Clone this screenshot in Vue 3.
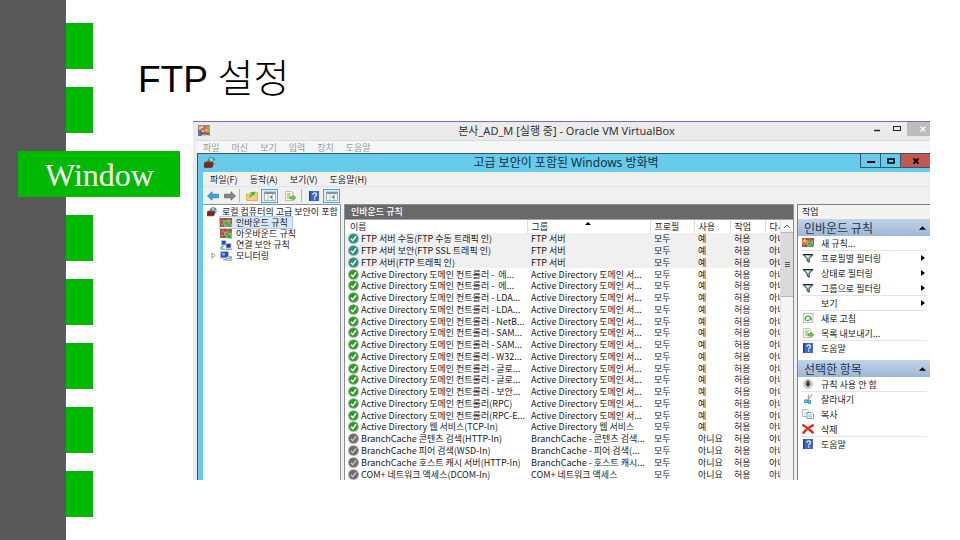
<script setup>
const tabsAfter = 5

const vmMenu = ['파일', '머신', '보기', '입력', '장치', '도움말']
const appMenu = ['파일(F)', '동작(A)', '보기(V)', '도움말(H)']

const tree = [
  { icon: 'inbound', label: '인바운드 규칙', selected: true },
  { icon: 'outbound', label: '아웃바운드 규칙' },
  { icon: 'connection', label: '연결 보안 규칙' },
  { icon: 'monitor', label: '모니터링', expandable: true }
]

const AD = 'Active Directory 도메인 컨트롤러'
const ADG = 'Active Directory 도메인 서...'

const rules = [
  { name: 'FTP 서버 수동(FTP 수동 트래픽 인)', group: 'FTP 서버', state: 'selected' },
  { name: 'FTP 서버 보안(FTP SSL 트래픽 인)', group: 'FTP 서버', state: 'selected' },
  { name: 'FTP 서버(FTP 트래픽 인)', group: 'FTP 서버', state: 'selected' },
  { name: AD + ' -  에...', group: ADG, state: 'on' },
  { name: AD + ' -  에...', group: ADG, state: 'on' },
  { name: AD + ' - LDA...', group: ADG, state: 'on' },
  { name: AD + ' - LDA...', group: ADG, state: 'on' },
  { name: AD + ' - NetB...', group: ADG, state: 'on' },
  { name: AD + ' - SAM...', group: ADG, state: 'on' },
  { name: AD + ' - SAM...', group: ADG, state: 'on' },
  { name: AD + ' - W32...', group: ADG, state: 'on' },
  { name: AD + ' - 글로...', group: ADG, state: 'on' },
  { name: AD + ' - 글로...', group: ADG, state: 'on' },
  { name: AD + ' - 보안...', group: ADG, state: 'on' },
  { name: AD + '(RPC)', group: ADG, state: 'on' },
  { name: AD + '(RPC-E...', group: ADG, state: 'on' },
  { name: 'Active Directory 웹 서비스(TCP-In)', group: 'Active Directory 웹 서비스', state: 'on' },
  { name: 'BranchCache 콘텐츠 검색(HTTP-In)', group: 'BranchCache - 콘텐츠 검색...', state: 'off' },
  { name: 'BranchCache 피어 검색(WSD-In)', group: 'BranchCache - 피어 검색(...', state: 'off' },
  { name: 'BranchCache 호스트 캐시 서버(HTTP-In)', group: 'BranchCache - 호스트 캐시...', state: 'off' },
  { name: 'COM+ 네트워크 액세스(DCOM-In)', group: 'COM+ 네트워크 액세스', state: 'off' }
]

const sections = [
  {
    title: '인바운드 규칙',
    items: [
      { icon: 'newrule', label: '새 규칙...', line: true },
      { icon: 'filter', label: '프로필별 필터링', sub: true },
      { icon: 'filter', label: '상태로 필터링', sub: true },
      { icon: 'filter', label: '그룹으로 필터링', sub: true, line: true },
      { label: '보기', sub: true, line: true },
      { icon: 'refresh', label: '새로 고침' },
      { icon: 'export', label: '목록 내보내기...', line: true },
      { icon: 'help', label: '도움말' }
    ]
  },
  {
    title: '선택한 항목',
    items: [
      { icon: 'disable', label: '규칙 사용 안 함', line: true },
      { icon: 'cut', label: '잘라내기' },
      { icon: 'copy', label: '복사' },
      { icon: 'delete', label: '삭제', line: true },
      { icon: 'help', label: '도움말' }
    ]
  }
]
</script>

<template>
  <svg class="defs" aria-hidden="true">
    <symbol id="vm" viewBox="0 0 12 12">
      <rect width="12" height="11" fill="#8b8a80" />
      <rect width="6" height="5" fill="#b5795c" />
      <rect x="6" y="1" width="3" height="6" fill="#e86a3a" />
      <rect x="9" y="1" width="3" height="7" fill="#74c742" />
      <rect x="0" y="5" width="3" height="6" fill="#4d7fae" />
      <path d="M1 2h4M1 4l4-2M7 7l2-3M4 6h2" stroke="#f2ece2" />
      <path d="M3 10V7l2 2 2-2 2 2 2-1" stroke="#a3283a" fill="none" />
      <path d="M4 10.500h7" stroke="#e9dfe2" stroke-width=".8" />
    </symbol>
    <symbol id="firewall" viewBox="0 0 12 12">
      <circle cx="7.500" cy="4.300" r="4" fill="#2f86c9" />
      <path d="M5 2q3-2 4 0T7 5zM9 4l3-1-1 4z" fill="#a5dc8c" />
      <path d="M0 5.500 2 4.500h6l1 1.500v4l-2 1H0z" fill="#9c3a2a" />
      <path d="M0 7h9M0 9h9M3 5v2M6 5v2M2 7v2M5 7v2M8 7v2M3 9v2M7 9v2" stroke="#4a1712" stroke-width=".6" />
    </symbol>
    <symbol id="wall" viewBox="0 0 12 10">
      <rect width="12" height="9" fill="#a64c3b" />
      <path d="M0 3h12M0 6h12M3 0v3M8 0v3M5 3v3M10 3v3M2 6v3M7 6v3" stroke="#d4a08f" stroke-width=".6" />
    </symbol>
    <symbol id="inbound" viewBox="0 0 12 10">
      <use href="#wall" width="12" height="10" />
      <path d="M3.500 3.500 10 2.500 8.500 4.500 12 7.500 10 9.800 7 6.800 5 8.800z" fill="#2fb13b" stroke="#e6f7df" stroke-width=".5" />
    </symbol>
    <symbol id="outbound" viewBox="0 0 12 10">
      <use href="#wall" width="12" height="10" />
      <path d="M12 9.800 6 9.500 7.500 8 4 5 6 2.800l3.200 3L11 4z" fill="#2fb13b" stroke="#e6f7df" stroke-width=".5" />
    </symbol>
    <symbol id="connection" viewBox="0 0 12 10">
      <rect x="1.500" y=".5" width="4.500" height="4.500" fill="#2449c8" stroke="#b8c4dc" stroke-width=".8" />
      <rect x="6" y="3.500" width="5" height="4.500" fill="#1c3cc0" stroke="#b8c4dc" stroke-width=".8" />
      <path d="M3 5.500v1.500H1v2h4" fill="none" stroke="#4c9a55" />
      <path d="M6 9.300h6" stroke="#707c94" />
    </symbol>
    <symbol id="monitor" viewBox="0 0 12 10">
      <rect x=".5" y=".5" width="8" height="6.500" fill="#2650d2" stroke="#b7c2da" />
      <path d="M2 2h3v2.500H2z" fill="#7fb1f3" />
      <path d="M3 8.800h4" stroke="#76849e" />
      <rect x="7" y="5.500" width="4.500" height="4" fill="#dce5ef" stroke="#8896a8" stroke-width=".7" />
      <path d="m8 7 1.200 1L11 6" fill="none" stroke="#38a34a" />
    </symbol>
    <symbol id="back" viewBox="0 0 12 10">
      <path d="M.5 5 5 .8v2.400h6.500v3.600H5v2.400z" fill="#39a7e4" stroke="#2272aa" stroke-width=".7" />
    </symbol>
    <symbol id="forward" viewBox="0 0 12 10">
      <path d="M11.500 5 7 .8v2.400H.5v3.600H7v2.400z" fill="#858585" stroke="#5d5d5d" stroke-width=".7" />
    </symbol>
    <symbol id="folder" viewBox="0 0 12 10">
      <path d="M.5 3h3l1-1.500h7v8H.5z" fill="#f1d27a" stroke="#c79d45" stroke-width=".7" />
      <path d="M3 7q0-3 2.500-4L4.500 1.500 9 .5 8.500 4.800 7.500 4Q5 5 3 7z" fill="#46b933" />
    </symbol>
    <symbol id="panel" viewBox="0 0 12 10">
      <rect x=".5" y="1" width="11" height="8.500" fill="#f4f5f6" stroke="#9aa2ab" stroke-width=".8" />
      <path d="M.5 2h11" stroke="#8590a0" stroke-width="2" />
      <path d="M4 3v6.500M8.500 3v6.500" stroke="#a7afb8" stroke-width=".7" />
      <path d="M8 4.200v3.800L5.500 6z" fill="#38ab36" />
    </symbol>
    <symbol id="export" viewBox="0 0 12 10">
      <path d="M1.500.5h6l1.500 1.500v7.500H1.500z" fill="#fdf8da" stroke="#b2aa82" stroke-width=".7" />
      <path d="M3 3h4M3 5h3M3 7h3" stroke="#7c8798" stroke-width=".8" />
      <path d="M6 5.500h3V4l3 2.700L9 9.300V8H6z" fill="#67c748" stroke="#429b2c" stroke-width=".5" />
    </symbol>
    <symbol id="help" viewBox="0 0 10 10">
      <rect width="10" height="10" fill="#3f66cc" />
      <path d="M.7 0v10" stroke="#203d91" stroke-width="1.400" />
      <path d="M3.800 3.700Q3.800 1.800 5.600 1.800t1.800 1.700c0 1.400-1.800 1.400-1.800 3" fill="none" stroke="#fff" stroke-width="1.200" />
      <rect x="5" y="7.400" width="1.300" height="1.200" fill="#fff" />
    </symbol>
    <symbol id="newrule" viewBox="0 0 12 10">
      <use href="#wall" width="12" height="10" />
      <path d="M5 4h6L9.500 5.500 12 8l-1.500 1.500L8 7 6 8.500z" fill="#2fb13b" stroke="#e6f7df" stroke-width=".4" />
      <path d="m3 0 .8 2L6 2.500 4 3.500 4 6 2.500 4.300 0 5l1.200-2L0 1.500l2 .3z" fill="#ffbf36" />
    </symbol>
    <symbol id="filter" viewBox="0 0 12 10">
      <path d="M1 1.500h10L7.200 5.500v3.700L5 7.700V5.500z" fill="#9fd2cd" stroke="#1d2c33" stroke-width="1" stroke-linejoin="round" />
      <path d="M3.500 2.300h3.500L6 5z" fill="#f0fffc" />
      <path d="M2 1.800h8.500" stroke="#1d2c33" />
    </symbol>
    <symbol id="refresh" viewBox="0 0 12 10">
      <rect x="1.500" y=".5" width="9.500" height="9" fill="#f6f8f6" stroke="#a8b0a8" stroke-width=".7" />
      <path d="M4 7.500A2.800 2.600 0 1 1 8.800 5.500" fill="none" stroke="#3caa3a" stroke-width="1.300" />
      <path d="M7 5.300h3.600L8.800 8zM3.500 8h3.500V6.300z" fill="#3caa3a" />
    </symbol>
    <symbol id="disable" viewBox="0 0 12 10">
      <circle cx="6" cy="5" r="4.600" fill="#d6d6d6" stroke="#a9a9a9" stroke-width=".6" />
      <path d="M4.500 1.800h3V4.500H9.200L6 8.300 2.800 4.500h1.700z" fill="#3f3f3f" />
    </symbol>
    <symbol id="cut" viewBox="0 0 12 10">
      <path d="M10.500 0 5.500 6.500M6.300 .5v6" stroke="#8091a3" />
      <circle cx="4" cy="7.300" r="1.400" fill="none" stroke="#2187d0" stroke-width="1.200" />
      <circle cx="7.300" cy="8" r="1.300" fill="none" stroke="#2187d0" stroke-width="1.200" />
    </symbol>
    <symbol id="copy" viewBox="0 0 12 10">
      <path d="M.5.5H5l1.500 1.500v5.500h-6z" fill="#fff" stroke="#99a6b5" stroke-width=".8" />
      <path d="M2 3h3M2 5h3" stroke="#9cb1c6" stroke-width=".7" />
      <path d="M5 3.500h4.500L11.500 5v4.500H5z" fill="#f5faff" stroke="#7d8da0" stroke-width=".8" />
      <path d="M6.500 6h3M6.500 7.800h3.500" stroke="#6c9cc8" stroke-width=".7" />
    </symbol>
    <symbol id="delete" viewBox="0 0 12 10">
      <path d="M1.200 1.300q5 3 9.600 7.200M10.800 1.300Q5 4 1.500 8.700" fill="none" stroke="#df2a26" stroke-width="2.400" stroke-linecap="round" />
    </symbol>
  </svg>

  <div class="slide">
    <div class="rail"></div>
    <div class="tabs">
      <i class="tab"></i>
      <i class="tab"></i>
      <div class="banner">Window</div>
      <i v-for="n in tabsAfter" :key="n" class="tab"></i>
    </div>

    <main class="content">
      <h1>FTP <span>설정</span></h1>

      <section class="vm">
        <header class="vm-title">
          <svg class="ico"><use href="#vm" /></svg>
          <h2>본사_AD_M [실행 중] - Oracle VM VirtualBox</h2>
          <div class="vm-ctl">
            <button aria-label="최소화"><svg viewBox="0 0 8 8"><path d="M1 5.500h6" stroke="#222" stroke-width="1.500" /></svg></button>
            <button aria-label="최대화"><svg viewBox="0 0 8 8"><rect x=".5" y="1.500" width="7" height="4" fill="none" stroke="#222" /></svg></button>
            <button class="close" aria-label="닫기"><svg viewBox="0 0 8 8"><path d="m1.500 1.500 5 5m0-5-5 5" stroke="#fff" stroke-width="1.200" /></svg></button>
          </div>
        </header>
        <nav class="vm-menu">
          <button v-for="m in vmMenu" :key="m">{{ m }}</button>
        </nav>

        <div class="app">
          <header class="app-title">
            <svg class="ico"><use href="#firewall" /></svg>
            <h2>고급 보안이 포함된 Windows 방화벽</h2>
            <div class="app-ctl">
              <button aria-label="창 최소화"><svg viewBox="0 0 8 8"><path d="M0 5h8" stroke="#000" stroke-width="2" /></svg></button>
              <button aria-label="창 최대화"><svg viewBox="0 0 8 8"><rect x="1" y="2" width="6" height="4" fill="none" stroke="#000" stroke-width="1.600" /></svg></button>
              <button class="close" aria-label="창 닫기"><svg viewBox="0 0 8 8"><path d="m1.500 1.500 5 5m0-5-5 5" stroke="#000" stroke-width="1.800" /></svg></button>
            </div>
          </header>

          <div class="client">
            <nav class="app-menu">
              <button v-for="m in appMenu" :key="m">{{ m }}</button>
            </nav>
            <div class="toolbar">
              <button aria-label="뒤로"><svg><use href="#back" /></svg></button>
              <button aria-label="앞으로"><svg><use href="#forward" /></svg></button>
              <span class="sep"></span>
              <button aria-label="위로"><svg><use href="#folder" /></svg></button>
              <button class="on" aria-label="콘솔 트리"><svg><use href="#panel" /></svg></button>
              <button class="exp" aria-label="내보내기"><svg><use href="#export" /></svg></button>
              <span class="sep"></span>
              <button aria-label="도움말"><svg><use href="#help" /></svg></button>
              <button class="on" aria-label="작업 창"><svg><use href="#panel" /></svg></button>
            </div>

            <div class="panes">
              <div class="tree">
                <button class="root"><svg><use href="#firewall" /></svg><span>로컬 컴퓨터의 고급 보안이 포함</span></button>
                <ul>
                  <li v-for="t in tree" :key="t.label">
                    <span class="twist"><svg v-if="t.expandable" viewBox="0 0 6 8"><path d="m1 1 4 3-4 3z" fill="#fff" stroke="#888" /></svg></span>
                    <button :class="{ picked: t.selected }"><svg><use :href="'#' + t.icon" /></svg><span>{{ t.label }}</span></button>
                  </li>
                </ul>
              </div>

              <div class="list">
                <h3>인바운드 규칙</h3>
                <div class="list-body">
                  <table>
                    <colgroup>
                      <col class="c-name" /><col class="c-group" /><col class="c-profile" /><col class="c-use" /><col class="c-act" /><col />
                    </colgroup>
                    <thead>
                      <tr>
                        <th>이름</th>
                        <th class="sorted">그룹<svg class="sort" viewBox="0 0 6 3"><path d="m0 3 3-3 3 3z" /></svg></th>
                        <th>프로필</th><th>사용</th><th>작업</th><th>다시</th>
                      </tr>
                    </thead>
                    <tbody>
                      <tr v-for="(r, i) in rules" :key="i" :class="r.state">
                        <td class="name">
                          <svg class="mark" viewBox="0 0 12 12">
                            <circle class="ring" cx="6" cy="6" r="5.800" />
                            <circle class="disc" cx="6" cy="6" r="4.600" />
                            <path class="tick" d="m3.300 6.200 2 2.200L8.800 3.500" />
                          </svg><span>{{ r.name }}</span>
                        </td>
                        <td>{{ r.group }}</td>
                        <td>모두</td>
                        <td>{{ r.state === 'off' ? '아니요' : '예' }}</td>
                        <td>허용</td>
                        <td>아니</td>
                      </tr>
                    </tbody>
                  </table>
                  <div class="scroll">
                    <button aria-label="위로 스크롤"><svg viewBox="0 0 8 6"><path d="m1 5 3-3 3 3" fill="none" stroke="#555" /></svg></button>
                    <div class="thumb"><i></i><i></i><i></i></div>
                  </div>
                </div>
              </div>

              <aside class="actions">
                <h3>작업</h3>
                <section v-for="s in sections" :key="s.title">
                  <h4>{{ s.title }}<svg viewBox="0 0 8 4"><path d="m0 4 4-4 4 4z" /></svg></h4>
                  <button v-for="a in s.items" :key="a.label" :class="{ line: a.line }">
                    <svg class="lead"><use v-if="a.icon" :href="'#' + a.icon" /></svg>
                    <span>{{ a.label }}</span>
                    <svg v-if="a.sub" class="more" viewBox="0 0 4 6"><path d="m0 0 4 3-4 3z" /></svg>
                  </button>
                </section>
              </aside>
            </div>
          </div>
        </div>
      </section>
    </main>
  </div>
</template>

<style>
body {
  background: #fff;
}
</style>

<style scoped>
.defs {
  position: absolute;
  width: 0;
  height: 0;
}
.slide {
  display: flex;
  min-height: 100vh;
  color: #1c1c1c;
  font: 9px/11px "Noto Sans CJK KR", sans-serif;
}
svg {
  display: block;
  flex: none;
}
button {
  display: flex;
  align-items: center;
  padding: 0;
  border: 0;
  background: none;
  color: inherit;
  font: inherit;
  white-space: nowrap;
}
h1, h2, h3, h4, ul {
  margin: 0;
  padding: 0;
  font-weight: 400;
}
.rail {
  flex: none;
  width: 66px;
  background: #595959;
}
.tabs {
  display: flex;
  flex: none;
  flex-direction: column;
  gap: 18px;
  width: 27px;
  padding: 23px 0;
  box-sizing: border-box;
}
.tab {
  height: 46px;
  background: #00b900;
}
.banner {
  z-index: 1;
  width: 162px;
  height: 46px;
  margin-left: -48px;
  padding-left: 27px;
  box-sizing: border-box;
  background: #00b900;
  color: #fff;
  font: 32px/48px "Liberation Serif", serif;
}
.content {
  flex: 1;
  min-width: 0;
  padding: 57px 30px 60px 100px;
}
h1 {
  height: 44px;
  margin: 0 0 20px -55px;
  color: #000;
  font: 37px/44px "Liberation Sans", "Noto Sans CJK KR", sans-serif;
}
h1 span {
  font-size: 39px;
  font-weight: 300;
}

.vm {
  border-top: 1px solid #8264cc;
  background: #ebebeb;
}
.vm-title {
  display: flex;
  align-items: center;
  height: 18px;
  padding-left: 5px;
}
.ico {
  width: 12px;
  height: 12px;
}
h2 {
  flex: 1;
  padding-left: 56px;
  color: #333;
  font: 11px/16px "Noto Sans", "Noto Sans CJK KR", sans-serif;
  text-align: center;
}
.vm-ctl, .app-ctl {
  display: flex;
  align-self: flex-start;
}
.vm-ctl button {
  justify-content: center;
  width: 20px;
  height: 14px;
}
.vm-ctl svg, .app-ctl svg {
  width: 8px;
  height: 8px;
}
.vm-ctl .close {
  width: 23px;
  padding-left: 8px;
  background: #bcbcbc;
}
.vm-menu {
  display: flex;
  gap: 12px;
  height: 12px;
  margin-left: 3px;
  padding-left: 7px;
  border-top: 1px solid #d8dadc;
  background: #f4f6f8;
  color: #999;
}
.app {
  margin-left: 4px;
  padding-left: 5px;
  border: solid #33566a;
  border-width: 1px 0 0 1px;
  background: #67caea;
}
.app-title {
  display: flex;
  align-items: center;
  height: 18px;
  padding-left: 1px;
}
.app-title h2 {
  color: #12303c;
  font-size: 12px;
}
.app-ctl button {
  justify-content: center;
  width: 20px;
  height: 14px;
  border: solid #2b5c70;
  border-width: 0 0 1px 1px;
}
.app-ctl .close {
  width: 30px;
  background: #c4584f;
}
.client {
  background: #f0f0f0;
}
.app-menu {
  display: flex;
  gap: 12px;
  height: 14px;
  padding-left: 7px;
  border-bottom: 1px solid #e2e2e2;
}
.toolbar {
  display: flex;
  align-items: center;
  gap: 2px;
  height: 17px;
  padding-left: 2px;
}
.toolbar button {
  justify-content: center;
  width: 15px;
  height: 13px;
}
.toolbar svg {
  width: 12px;
  height: 10px;
}
.toolbar .on {
  width: 17px;
  height: 14px;
  box-sizing: border-box;
  border: 1px solid #43a6dc;
  background: #d9effa;
}
.toolbar .exp {
  width: 19px;
}
.sep {
  width: 1px;
  height: 13px;
  margin-right: 2px;
  background: #b4b4b4;
}

.panes {
  display: grid;
  grid-template-columns: 138px minmax(0, 1fr) 133px;
  gap: 3px;
}
.tree {
  overflow: hidden;
  padding-top: 1px;
  border: 1px solid #8a8f96;
  border-width: 1px 1px 0 0;
  background: #fff;
}
.tree svg {
  width: 12px;
  height: 10px;
}
.tree button {
  gap: 4px;
  height: 11px;
}
.root {
  padding-left: 3px;
}
.tree ul {
  padding: 0 0 0 8px;
  list-style: none;
}
.tree li {
  display: flex;
  align-items: center;
}
.twist {
  width: 9px;
}
.twist svg {
  width: 5px;
  height: 7px;
}
.tree .picked {
  background: linear-gradient(90deg, #fff 12px, #d6e7f8 12px);
  outline: 1px solid #a9cdec;
  padding-right: 4px;
}
h3 {
  font-size: 9px;
}
.list {
  display: flex;
  flex-direction: column;
  min-width: 0;
  border: 1px solid #8a8f96;
  border-bottom: 0;
  background: #fff;
}
.list h3 {
  height: 14px;
  padding-left: 6px;
  background: #696969;
  color: #fff;
  font-weight: 500;
  line-height: 13px;
}
.list-body {
  display: flex;
  border-top: 1px solid #a0a4a8;
}
table {
  flex: 1;
  min-width: 0;
  width: 0;
  height: 260px;
  border-collapse: collapse;
  table-layout: fixed;
}
.c-name { width: 182px; }
.c-group { width: 123px; }
.c-profile { width: 44px; }
.c-use { width: 36px; }
.c-act { width: 35px; }
th, td {
  overflow: hidden;
  padding: 0 0 0 4px;
  font-weight: 400;
  text-align: left;
  white-space: pre;
}
th {
  height: 13px;
  border-right: 1px solid #dcdcdc;
}
th:first-child {
  padding-left: 5px;
}
th:last-child {
  border-right: 0;
}
.sorted {
  position: relative;
}
.sort {
  position: absolute;
  top: 2px;
  left: 57px;
  width: 6px;
  height: 3px;
}
.name {
  padding-left: 3px;
}
.mark {
  display: inline-block;
  width: 11px;
  height: 11px;
  margin-right: 2px;
  vertical-align: top;
}
.selected td {
  background: #f0f0f0;
}
.ring { fill: #8f978d; }
.disc { fill: #26a01e; }
.tick {
  fill: none;
  stroke: #fff;
  stroke-width: 1.6px;
}
.selected .ring { fill: #6e9ab8; }
.selected .disc { fill: #259367; }
.off .ring { fill: #8c8c8c; }
.off .disc { fill: #6b6b6b; }
.off .tick { stroke: #c4c4c4; }

.scroll {
  width: 12px;
  border-left: 1px solid #dedede;
  background: #f5f5f5;
}
.scroll button {
  justify-content: center;
  width: 100%;
  height: 12px;
}
.scroll button svg {
  width: 8px;
  height: 6px;
}
.thumb {
  display: flex;
  flex-direction: column;
  align-items: center;
  justify-content: center;
  gap: 1px;
  height: 63px;
  border: 1px solid #b5b5b5;
  border-width: 1px 0;
  background: #dadada;
}
.thumb i {
  width: 5px;
  height: 1px;
  background: #555;
}

.actions {
  border: 1px solid #7c8188;
  border-width: 1px 0 0 1px;
  background: #fff;
}
.actions h3 {
  height: 14px;
  padding-left: 4px;
  background: #f3f3f3;
  line-height: 14px;
}
.actions h4 {
  display: flex;
  align-items: center;
  justify-content: space-between;
  height: 17px;
  padding: 0 4px 0 6px;
  background: linear-gradient(#c0d3ea, #9db7d6);
  color: #22354d;
  font-size: 12px;
}
.actions h4 svg {
  width: 7px;
  height: 4px;
}
.actions section + section {
  margin-top: 4px;
}
.actions section button {
  width: calc(100% - 6px);
  height: 15px;
  margin-left: 3px;
  gap: 7px;
  padding: 0 2px 0 1px;
  border-bottom: 1px solid transparent;
}
.actions section .line {
  border-color: #e4e4e4;
}
.lead {
  width: 12px;
  height: 10px;
}
.more {
  width: 4px;
  height: 6px;
  margin-left: auto;
}
</style>
